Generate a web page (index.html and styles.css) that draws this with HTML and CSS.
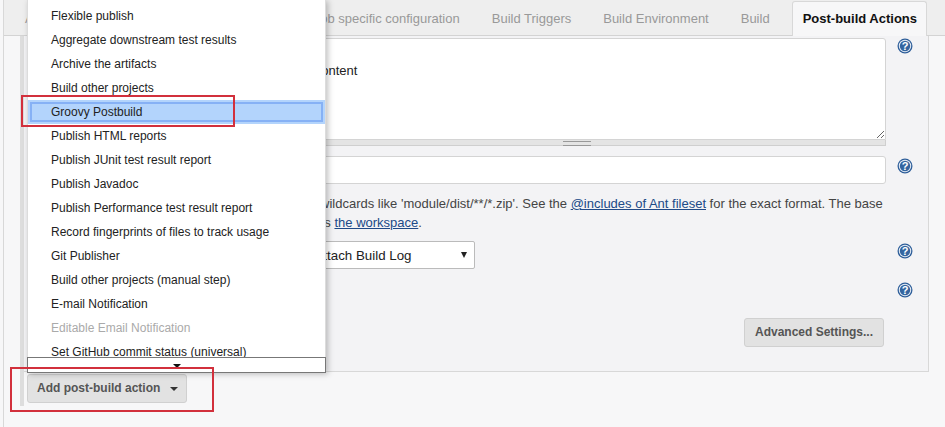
FILE: index.html
```html
<!DOCTYPE html>
<html>
	<head>
		<title>Post-build Actions</title>
		<link rel="stylesheet" href="styles.css">
	</head>
	<body>
		<div class="main">
			<div class="tabs">
				<div class="tab first">Advanced Project Options</div>
				<div class="tab">Job specific configuration</div>
				<div class="tab">Build Triggers</div>
				<div class="tab">Build Environment</div>
				<div class="tab">Build</div>
				<div class="tab active">Post-build Actions</div>
			</div>

			<div class="section">
				<div class="panel">
					<div class="row row-area">
						<div class="field">
							<textarea class="area" spellcheck="false">

Default content</textarea>
							<div class="grip"><span class="grip-lines"></span></div>
						</div>
						<svg class="help" viewBox="0 0 16 16"><circle cx="8" cy="8" r="7.5" fill="#2f5f9a"/><circle cx="8" cy="8" r="6.2" fill="#e8eef6"/><circle cx="8" cy="8" r="5.2" fill="#34659f"/><text x="8" y="12" text-anchor="middle" class="help-mark">?</text></svg>
					</div>

					<div class="row row-input">
						<div class="field"><input class="text-input" type="text"></div>
						<svg class="help" viewBox="0 0 16 16"><circle cx="8" cy="8" r="7.5" fill="#2f5f9a"/><circle cx="8" cy="8" r="6.2" fill="#e8eef6"/><circle cx="8" cy="8" r="5.2" fill="#34659f"/><text x="8" y="12" text-anchor="middle" class="help-mark">?</text></svg>
					</div>

					<div class="note">
						Can use wildcards like 'module/dist/**/*.zip'. See the <a href="#">@includes of Ant fileset</a> for the exact format. The base directory is <a href="#">the workspace</a>.
					</div>

					<div class="row row-select">
						<div class="field">
							<div class="select"><span>Do Not Attach Build Log</span><span class="select-arrow"></span></div>
						</div>
						<svg class="help" viewBox="0 0 16 16"><circle cx="8" cy="8" r="7.5" fill="#2f5f9a"/><circle cx="8" cy="8" r="6.2" fill="#e8eef6"/><circle cx="8" cy="8" r="5.2" fill="#34659f"/><text x="8" y="12" text-anchor="middle" class="help-mark">?</text></svg>
					</div>

					<div class="row row-plain">
						<div class="field"></div>
						<svg class="help" viewBox="0 0 16 16"><circle cx="8" cy="8" r="7.5" fill="#2f5f9a"/><circle cx="8" cy="8" r="6.2" fill="#e8eef6"/><circle cx="8" cy="8" r="5.2" fill="#34659f"/><text x="8" y="12" text-anchor="middle" class="help-mark">?</text></svg>
					</div>

					<div class="advanced-row">
						<div class="btn advanced">Advanced Settings...</div>
					</div>
				</div>

				<div class="add-row">
					<div class="btn add">Add post-build action<span class="caret"></span></div>
				</div>
			</div>
		</div>

		<!-- dropdown opened over the form -->
		<div class="menu">
			<div class="menu-list">
				<div class="item">Flexible publish</div>
				<div class="item">Aggregate downstream test results</div>
				<div class="item">Archive the artifacts</div>
				<div class="item">Build other projects</div>
				<div class="item selected">Groovy Postbuild</div>
				<div class="item">Publish HTML reports</div>
				<div class="item">Publish JUnit test result report</div>
				<div class="item">Publish Javadoc</div>
				<div class="item">Publish Performance test result report</div>
				<div class="item">Record fingerprints of files to track usage</div>
				<div class="item">Git Publisher</div>
				<div class="item">Build other projects (manual step)</div>
				<div class="item">E-mail Notification</div>
				<div class="item disabled">Editable Email Notification</div>
				<div class="item">Set GitHub commit status (universal)</div>
			</div>
			<div class="menu-more"><span class="more-arrow"></span></div>
		</div>

		<!-- red annotation boxes -->
		<div class="mark mark-item"></div>
		<div class="mark mark-button"></div>
	</body>
</html>
```

FILE: styles.css
```css
html, body {
	margin: 0;
	height: 427px;
	overflow: hidden;
}

body {
	background-color: #f7f7f8;
	font-family: "Liberation Sans", Arial, sans-serif;
	font-size: 12px;
	color: #333;
	position: relative;
}

.main {
	margin-left: 3px;
	height: 427px;
	border-left: 1px solid #d8d8d8;
}

/* tab bar */
.tabs {
	display: flex;
	height: 36px;
	padding-left: 21px;
	padding-right: 18px;
	background-color: #eeeeee;
	border-bottom: 1px solid #d3d3d3;
	box-sizing: border-box;
	align-items: flex-end;
}

.tab {
	padding: 0 16px;
	height: 33px;
	line-height: 34px;
	font-size: 13px;
	color: #999;
}

.tab.first {
	padding-left: 0;
	margin-right: auto;
}

.tab.active {
	margin-left: 6px;
	padding: 0 9px 0 10px;
	color: #111;
	font-weight: bold;
	background-color: #f7f7f8;
	border: 1px solid #d8d8d8;
	border-bottom: none;
	border-radius: 3px 3px 0 0;
	margin-bottom: -1px;
	height: 34px;
}

/* form */
.section {
	margin-left: 16px;
	border-left: 4px solid #dddddd;
	width: 905px;
	padding-bottom: 3px;
}

.panel {
	height: 336px;
	box-sizing: border-box;
	padding: 2px 0 0 244px;
	background-color: #f3f3f5;
	border-right: 1px solid #d8d8d8;
	border-bottom: 1px solid #d8d8d8;
}

.row {
	display: grid;
	grid-template-columns: 618px 16px;
	column-gap: 11px;
}

.area {
	display: block;
	width: 618px;
	height: 102px;
	box-sizing: border-box;
	padding: 9px 4px 3px 1px;
	font-family: "Liberation Sans", Arial, sans-serif;
	font-size: 13px;
	line-height: 15px;
	color: #222;
	background-color: #fff;
	border: 1px solid #d4d4d4;
	border-radius: 3px 3px 0 0;
	outline: none;
}

.grip {
	height: 6px;
	box-sizing: border-box;
	background-color: #e4e4e4;
	border: 1px solid #cfcfcf;
	border-top: none;
	display: flex;
	justify-content: center;
}

.grip-lines {
	width: 28px;
	height: 3px;
	margin-top: 1px;
	border-top: 1px solid #999;
	border-bottom: 1px solid #999;
}

.help {
	width: 16px;
	height: 16px;
}

.help-mark {
	font-family: "Liberation Sans", Arial, sans-serif;
	font-size: 11px;
	font-weight: bold;
	fill: #fff;
}

.row-input {
	margin-top: 10px;
}

.row-input .help {
	margin-top: 2px;
}

.text-input {
	display: block;
	width: 618px;
	height: 28px;
	box-sizing: border-box;
	background-color: #fff;
	border: 1px solid #d4d4d4;
	border-radius: 3px;
	outline: none;
}

.note {
	width: 618px;
	margin-top: 10px;
	font-size: 13px;
	line-height: 19px;
	color: #444;
}

.note a {
	color: #204a87;
}

.row-select {
	margin-top: 9px;
}

.row-select .help {
	margin-top: 2px;
}

.select {
	display: flex;
	justify-content: space-between;
	align-items: center;
	width: 235px;
	height: 28px;
	margin-left: -28px;
	box-sizing: border-box;
	padding: 0 7px 0 29px;
	font-size: 13.33px;
	color: #222;
	background-color: #fff;
	border: 1px solid #bbb;
	border-radius: 2px;
}

.select-arrow {
	width: 0;
	height: 0;
	border-left: 3px solid transparent;
	border-right: 3px solid transparent;
	border-top: 6px solid #222;
}

.row-plain {
	margin-top: 13px;
}

.row-plain .help {
	grid-column: 2;
}

.advanced-row {
	display: flex;
	justify-content: flex-end;
	width: 616px;
	margin-top: 20px;
}

.btn {
	box-sizing: border-box;
	height: 29px;
	line-height: 27px;
	font-weight: bold;
	color: #555;
	background-color: #e2e2e2;
	border: 1px solid #d0d0d0;
	border-radius: 3px;
}

.advanced {
	width: 140px;
	text-align: center;
}

.add-row {
	padding: 2px 0 0 3px;
}

.add {
	width: 160px;
	padding-left: 9px;
}

.caret {
	display: inline-block;
	margin-left: 10px;
	vertical-align: middle;
	border-left: 4px solid transparent;
	border-right: 4px solid transparent;
	border-top: 4px solid #333;
}

/* dropdown */
.menu {
	position: absolute;
	left: 27px;
	top: 0;
	width: 299px;
	box-sizing: border-box;
	box-shadow: 2px 1px 6px rgba(0, 0, 0, 0.25);
}

.menu-list {
	height: 357px;
	overflow: hidden;
	background-color: #fff;
	border-left: 1px solid #dcdcdc;
	border-right: 1px solid #dcdcdc;
	padding-top: 4px;
	box-sizing: border-box;
}

.item {
	height: 24px;
	line-height: 25px;
	padding-left: 23px;
	color: #222;
	white-space: nowrap;
	box-sizing: border-box;
}

.item.selected {
	background-color: #b3d4fc;
	box-shadow: inset 0 0 0 2px #b3d4fc, inset 0 0 0 4px #86b1f5;
}

.item.disabled {
	color: #aaa;
}

.menu-more {
	height: 16px;
	box-sizing: border-box;
	background-color: #fff;
	border: 1px solid #777;
	display: flex;
	justify-content: center;
}

.more-arrow {
	width: 0;
	height: 0;
	margin-top: 6px;
	border-left: 4px solid transparent;
	border-right: 4px solid transparent;
	border-top: 4px solid #111;
}

/* annotations */
.mark {
	position: absolute;
	box-sizing: border-box;
	border: 2px solid #d2303c;
}

.mark-item {
	left: 21px;
	top: 95px;
	width: 214px;
	height: 32px;
}

.mark-button {
	left: 10px;
	top: 367px;
	width: 204px;
	height: 45px;
}
```
